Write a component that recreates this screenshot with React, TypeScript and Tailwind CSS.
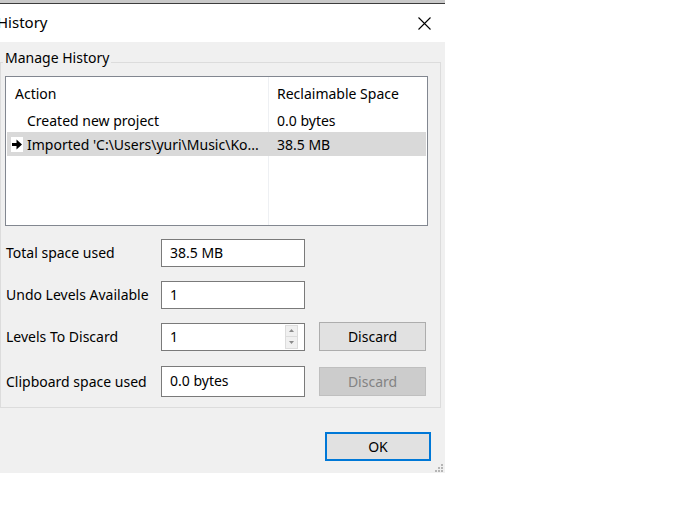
import React from "react";

const FONT = { fontFamily: '"Noto Sans", "Open Sans", sans-serif' };

function ArrowMark() {
  return (
    <svg width="12" height="15" viewBox="0 0 12 15" className="shrink-0">
      <rect x="0" y="0" width="12" height="15" fill="#ffffff" />
      <path d="M1 6h4.5V2.5L11 7.5l-5.5 5V9H1z" fill="#000000" />
    </svg>
  );
}

function Field({
  label,
  value,
  h = "h-[28px]",
  spinner,
  button,
  extra = "",
}: {
  label: string;
  value: string;
  h?: string;
  spinner?: boolean;
  button?: "on" | "off";
  extra?: string;
}) {
  return (
    <div className={`flex items-center h-[31px] ${extra}`}>
      <div className="w-[160px] pl-[5px] text-[14px] text-black">{label}</div>
      <div
        className={`relative w-[144px] ${h} bg-white border border-[#7a7a7a] flex items-center pl-[8px] text-[14px] text-black`}
      >
        {value}
        {spinner && (
          <div className="absolute right-[6px] top-[1px] w-[13px] h-[24px] flex flex-col">
            <div className="flex-1 bg-[#f0f0f0] border border-[#dcdcdc] flex items-center justify-center">
              <svg width="5" height="3" viewBox="0 0 5 3">
                <path d="M0 3L2.5 0L5 3z" fill="#8a8a8a" />
              </svg>
            </div>
            <div className="flex-1 bg-[#f0f0f0] border border-t-0 border-[#dcdcdc] flex items-center justify-center">
              <svg width="5" height="3" viewBox="0 0 5 3">
                <path d="M0 0L2.5 3L5 0z" fill="#8a8a8a" />
              </svg>
            </div>
          </div>
        )}
      </div>
      {button && (
        <div
          className={`ml-[14px] w-[107px] h-[29px] flex items-center justify-center text-[14px] border ${
            button === "on"
              ? "bg-[#e1e1e1] border-[#adadad] text-black"
              : "bg-[#cccccc] border-[#bfbfbf] text-[#838383]"
          }`}
        >
          Discard
        </div>
      )}
    </div>
  );
}

export default function App() {
  return (
    <div className="w-[695px] h-[522px] bg-white overflow-hidden" style={FONT}>
      <div className="w-[445px] flex flex-col">
        {/* background window strip */}
        <div className="h-[4px] bg-[#c9c9c9] border-b border-[#3c3c3c]" />

        {/* title bar */}
        <div className="h-[38px] bg-white flex items-center justify-between">
          <span className="text-[15px] text-black -ml-[3px] -mt-[2px]">History</span>
          <svg width="13" height="13" viewBox="0 0 13 13" className="mr-[14px]">
            <path d="M0.5 0.5L12.5 12.5M12.5 0.5L0.5 12.5" stroke="#000" strokeWidth="1.1" />
          </svg>
        </div>

        {/* body */}
        <div className="relative h-[431px] bg-[#f0f0f0] pt-[20px]">
          <div className="relative w-[441px] h-[346px] border border-[#dcdcdc]">
            <span className="absolute -top-[16px] left-[2px] px-[2px] bg-[#f0f0f0] text-[14px] text-black">
              Manage History
            </span>

            {/* list */}
            <div className="ml-[4px] mt-[13px] w-[423px] h-[150px] border border-[#828790] bg-white p-[1px] flex flex-col relative">
              <div className="absolute top-0 bottom-0 left-[262px] w-px bg-[#eef0f3]" />
              <div className="flex h-[30px] items-center text-[14px] text-black">
                <div className="w-[262px] pl-[8px]">Action</div>
                <div className="pl-[8px]">Reclaimable Space</div>
              </div>
              <div className="flex h-[24px] items-center text-[14px] text-black">
                <div className="w-[262px] pl-[20px]">Created new project</div>
                <div className="pl-[8px]">0.0 bytes</div>
              </div>
              <div className="flex h-[24px] items-center text-[14px] text-black bg-[#d9d9d9] relative">
                <div className="w-[262px] pl-[4px] flex items-center gap-[4px] whitespace-nowrap overflow-hidden">
                  <ArrowMark />
                  <span>Imported 'C:\Users\yuri\Music\Ko...</span>
                </div>
                <div className="pl-[8px]">38.5 MB</div>
              </div>
            </div>

            {/* fields */}
            <div className="mt-[11px] flex flex-col gap-[11px]">
              <Field label="Total space used" value="38.5 MB" />
              <Field label="Undo Levels Available" value="1" />
              <Field label="Levels To Discard" value="1" spinner button="on" />
              <Field
                label="Clipboard space used"
                value="0.0 bytes"
                h="h-[31px] pb-[3px]"
                button="off"
                extra="mt-[3px]"
              />
            </div>
          </div>

          {/* OK */}
          <div className="flex justify-end pr-[14px] mt-[24px]">
            <div className="w-[106px] h-[29px] border-2 border-[#0078d7] bg-[#e1e1e1] flex items-center justify-center text-[14px] text-black">
              OK
            </div>
          </div>

          {/* resize grip */}
          <svg width="11" height="11" viewBox="0 0 11 11" className="absolute right-[2px] bottom-[1px]">
            {[
              [9, 1],
              [6, 4],
              [9, 4],
              [3, 7],
              [6, 7],
              [9, 7],
            ].map(([x, y], i) => (
              <rect key={i} x={x} y={y + 2} width="2" height="2" fill="#b5b5b5" />
            ))}
          </svg>
        </div>
      </div>
    </div>
  );
}
